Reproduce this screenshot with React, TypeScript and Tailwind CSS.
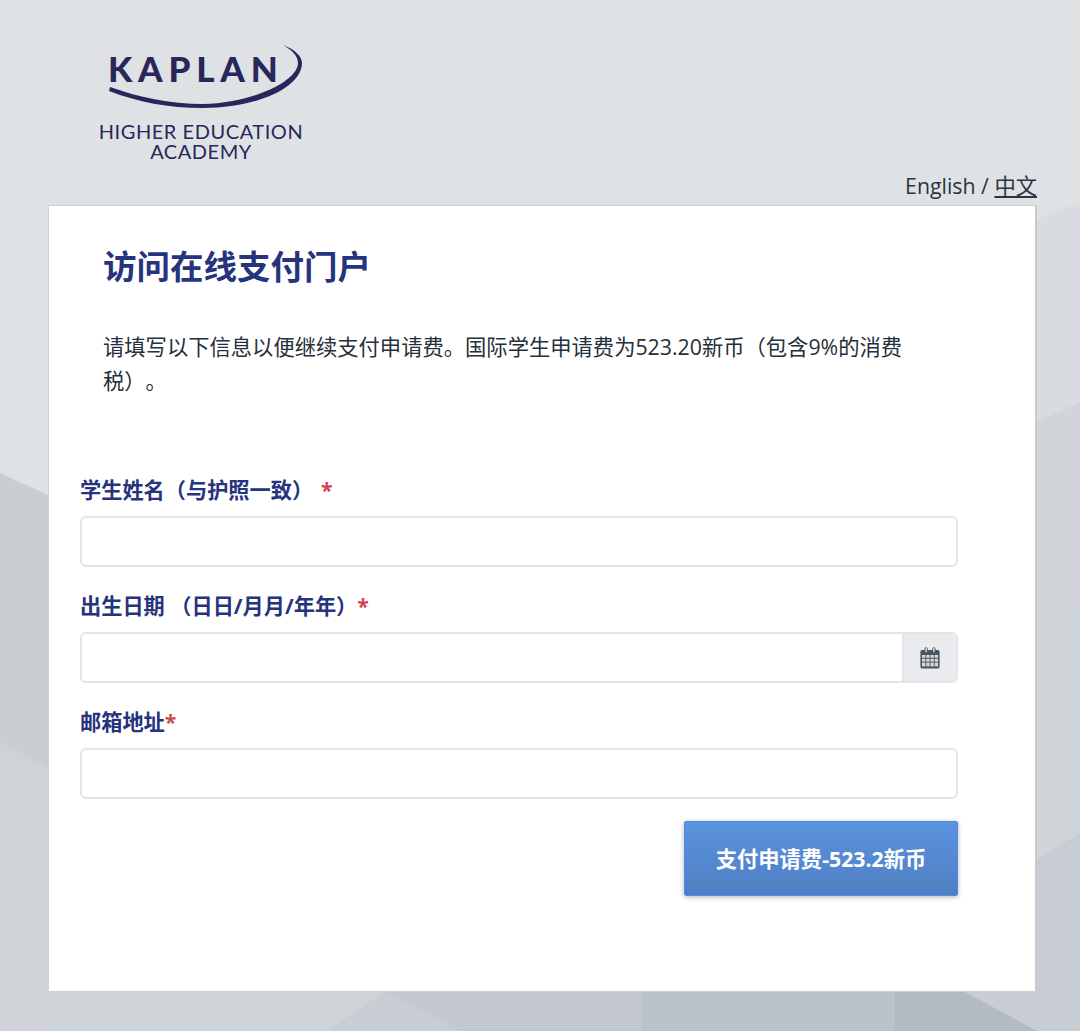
const FONT = "font-['Open_Sans','Noto_Sans_CJK_SC',sans-serif]";

function Backdrop() {
  return (
    <svg
      className="absolute inset-0 h-full w-full"
      viewBox="0 0 1080 1031"
      preserveAspectRatio="none"
      aria-hidden="true"
    >
      <rect width="1080" height="1031" fill="#dee2e5" />
      <polygon points="1036,220 1080,202 1080,1031 1036,1031" fill="#d8dce0" />
      <polygon points="1036,422 1080,402 1080,1031 1036,1031" fill="#d1d5d9" />
      <polygon points="1036,622 1080,602 1080,1031 1036,1031" fill="#cfd4d8" />
      <polygon points="1036,860 1080,833 1080,1031 1036,1031" fill="#c8ccd5" />
      <polygon points="0,473 48,495 48,1031 0,1031" fill="#c9ced3" />
      <polygon points="0,742 48,768 48,1031 0,1031" fill="#cfd3d7" />
      <rect x="48" y="992" width="1000" height="39" fill="#cfd4d8" />
      <polygon points="327,1031 385,992 1036,992 1036,1031" fill="#c4c8cf" />
      <polygon points="327,1031 385,992 460,1031" fill="#c9cdd4" />
      <rect x="641" y="992" width="254" height="39" fill="#bbc2c8" />
      <rect x="895" y="992" width="145" height="39" fill="#b4bac2" />
      <polygon points="965,992 1037,1031 1080,1031 1080,992" fill="#c8ccd5" />
    </svg>
  );
}

function Logo() {
  return (
    <div className="flex w-[206px] flex-col items-center text-[#29265b]">
      <div className="relative h-[70px] w-[206px]">
        <span className="absolute left-[10px] top-[3px] whitespace-nowrap font-['Lato',sans-serif] text-[35px] font-black leading-[46px] tracking-[5.800px]">
          KAPLAN
        </span>
        <svg className="absolute left-0 top-0" width="206" height="70" viewBox="0 0 206 70" aria-hidden="true">
          <path
            d="M11 49 C 40 60 70 66 105 66 C 160 66 204 45 204 21 C 204 14 196 7 185 3 C 194 8 200 14 200 21 C 200 39 155 61 105 62 C 72 62 40 55 12 45 Z"
            fill="currentColor"
          />
        </svg>
      </div>
      <div className="mt-[9px] whitespace-nowrap text-center font-['Lato',sans-serif] text-[20px] leading-[20px] tracking-[0.55px]">
        HIGHER EDUCATION
        <br />
        ACADEMY
      </div>
    </div>
  );
}

function CalendarIcon() {
  return (
    <svg width="20" height="22" viewBox="0 0 20 22" aria-hidden="true">
      <path
        d="M2 3h2.5V1.8a1.6 1.6 0 0 1 3.2 0V3h4.6V1.8a1.6 1.6 0 0 1 3.2 0V3H18a1.6 1.6 0 0 1 1.6 1.6v15.2A1.6 1.6 0 0 1 18 21.4H2A1.6 1.6 0 0 1 .4 19.800V4.600A1.600 1.600 0 0 1 2 3Z"
        fill="#4b5560"
      />
      <rect x="5.500" y="0.800" width="1.300" height="4.400" rx="0.600" fill="#e9ebee" />
      <rect x="13.200" y="0.800" width="1.300" height="4.400" rx="0.600" fill="#e9ebee" />
      <g fill="#d5d8dc">
        <rect x="2" y="8" width="3.400" height="2.800" />
        <rect x="6.300" y="8" width="3.300" height="2.800" />
        <rect x="10.500" y="8" width="3.300" height="2.800" />
        <rect x="14.700" y="8" width="3.300" height="2.800" />
        <rect x="2" y="11.800" width="3.400" height="2.800" />
        <rect x="6.300" y="11.800" width="3.300" height="2.800" />
        <rect x="10.500" y="11.800" width="3.300" height="2.800" />
        <rect x="14.700" y="11.800" width="3.300" height="2.800" />
        <rect x="2" y="15.600" width="3.400" height="3.800" />
        <rect x="6.300" y="15.600" width="3.300" height="3.800" />
        <rect x="10.500" y="15.600" width="3.300" height="3.800" />
        <rect x="14.700" y="15.600" width="3.300" height="3.800" />
      </g>
    </svg>
  );
}

interface FieldProps {
  label: string;
  gap?: boolean;
  hasCalendar?: boolean;
}

function Field({ label, gap, hasCalendar }: FieldProps) {
  return (
    <div className="flex flex-col">
      <label className="mb-[10px] h-[34px] text-[21.200px] font-bold leading-[36px] text-[#26337d]">
        {label}
        <span className={gap ? "ml-[8px] text-[#d0444f]" : "text-[#d0444f]"}>*</span>
      </label>
      {hasCalendar ? (
        <div className="flex h-[51px] overflow-hidden rounded-[6px] border-2 border-[#e2e4e7]">
          <input className="min-w-0 flex-1 bg-white outline-none" type="text" />
          <div className="flex w-[54px] items-center justify-center border-l-2 border-[#e2e4e7] bg-[#e9ebee]">
            <CalendarIcon />
          </div>
        </div>
      ) : (
        <input className="h-[51px] rounded-[6px] border-2 border-[#e2e4e7] bg-white outline-none" type="text" />
      )}
    </div>
  );
}

export default function App() {
  return (
    <div className={`relative h-[1031px] w-[1080px] overflow-hidden [text-spacing-trim:space-all] ${FONT}`}>
      <Backdrop />
      <div className="relative flex h-full flex-col pl-[48px] pr-[43px]">
        <div className="h-[168px] pl-[50px] pt-[42px]">
          <Logo />
        </div>
        <div className="h-[37px] text-right text-[21.300px] leading-[35px] text-[#2b3640]">
          English / <span className="underline">中文</span>
        </div>
        <div className="h-[787px] border border-[#cfd1d3] border-r-2 border-r-[#c8cacc] bg-white pl-[31px] pr-[77px]">
          <h1 className="mt-[36px] pl-[23px] text-[33.500px] font-bold leading-[48px] text-[#26337d]">访问在线支付门户</h1>
          <p className="mt-[40px] w-[830px] pl-[23px] text-[21.300px] leading-[34px] text-[#25303a]">
            请填写以下信息以便继续支付申请费。国际学生申请费为523.20新币（包含9%的消费税）。
          </p>
          <form className="mt-[74px] flex flex-col gap-[21px]">
            <Field label="学生姓名（与护照一致）" gap />
            <Field label="出生日期 （日日/月月/年年）" hasCalendar />
            <Field label="邮箱地址" />
            <div className="mt-[1px] flex justify-end">
              <button
                type="button"
                className="h-[75px] w-[274px] rounded-[2px] border border-[#4a8cf0] bg-gradient-to-b from-[#5a93df] to-[#4f7fc2] text-[21.300px] font-bold text-white shadow-[0_1px_5px_rgba(0,0,0,0.3)]"
              >
                支付申请费-523.2新币
              </button>
            </div>
          </form>
        </div>
      </div>
    </div>
  );
}
